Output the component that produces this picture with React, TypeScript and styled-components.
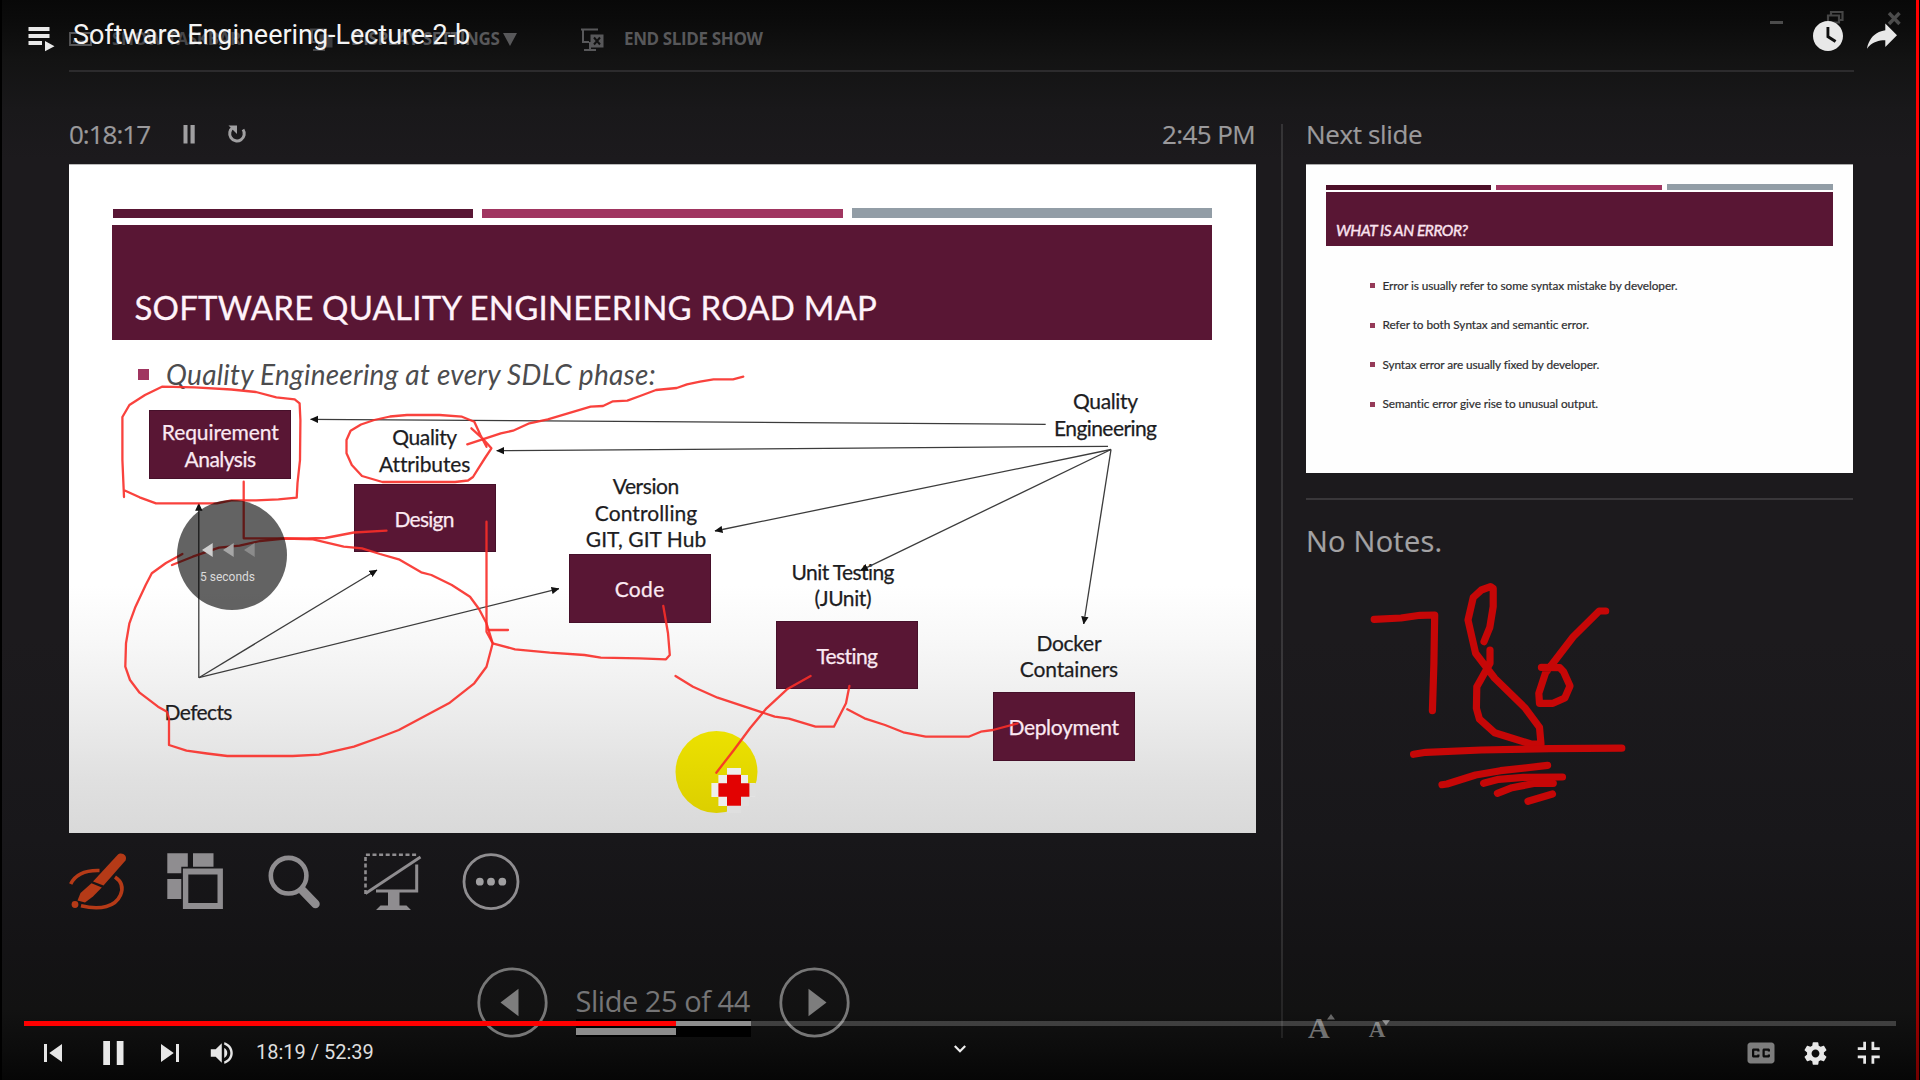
import React from "react";
import styled, { createGlobalStyle } from "styled-components";

const PLUM = "#591634";
const PINK = "#a03560";
const STEEL = "#929da6";
const ui = `"Open Sans", "Noto Sans", sans-serif`;
const slideFont = `Lato, "Open Sans", sans-serif`;

const SLIDE_X = 69;
const SLIDE_Y = 164;

const GlobalStyle = createGlobalStyle`
  body { margin: 0; background: #000; overflow: hidden; }
  * { box-sizing: border-box; }
  svg { display: block; flex: none; }
`;

const Player = styled.main`
  position: relative;
  width: 1920px;
  height: 1080px;
  overflow: hidden;
  background: #000;
  padding: 0 1px 0 2px;
  display: flex;
`;

const RecordingEdge = styled.div`
  width: 3px;
  background: linear-gradient(#f00 0, #f00 55%, #c00000 88%, #700000 100%);
`;

/* ---------- presenter view ---------- */

const Presenter = styled.section`
  flex: 1;
  height: 1080px;
  padding: 0 60px 0 67px;
  display: flex;
  flex-direction: column;
  background: linear-gradient(
    #080808 0, #0b0b0b 20px, #131313 60px, #19181a 110px, #1c1a1d 160px,
    #1c1a1d 640px, #18171a 840px, #141315 950px, #121212 1010px, #0c0c0c 1050px, #060606 1080px
  );
`;

const PresenterBar = styled.header`
  height: 72px;
  border-bottom: 2px solid #2c2b2d;
  display: flex;
  align-items: flex-start;
  padding-top: 26px;
  margin-right: 2px;
  position: relative;
`;

const BarItem = styled.div<{ $w: number; $dim?: boolean }>`
  display: flex;
  align-items: center;
  width: ${(p) => p.$w}px;
  height: 26px;
  color: ${(p) => (p.$dim ? "#454547" : "#58585a")};
  font: 700 17px/26px ${ui};
  letter-spacing: -0.37px;
  white-space: nowrap;
`;

const BarIcon = styled.span<{ $gap: number }>`
  display: flex;
  margin-right: ${(p) => p.$gap}px;
`;

const WindowButtons = styled.div`
  position: absolute;
  left: 1699px;
  top: 9px;
`;

const Columns = styled.div`
  display: grid;
  grid-template-columns: 1186px 51px 547px;
  height: 1008px;
`;

const SlideColumn = styled.div`
  padding-top: 44px;
`;

const SideColumn = styled.div`
  padding-top: 44px;
`;

const Divider = styled.div`
  width: 2px;
  height: 914px;
  margin: 52px 0 0 25.5px;
  background: linear-gradient(#353436 0, #3a383b 80%, #222 100%);
`;

const Label = styled.span<{ $ls: number }>`
  font: 400 26px/36px ${ui};
  letter-spacing: ${(p) => p.$ls}px;
  color: #9b9a9c;
  -webkit-text-stroke: 0.2px #9b9a9c;
  white-space: nowrap;
`;

const StatusRow = styled.div`
  display: flex;
  align-items: center;
  height: 48px;
  padding-bottom: 12px;
`;

const TimerButtons = styled.div`
  margin-left: 33px;
  flex: 1;
`;

/* ---------- slides ---------- */

const Slide = styled.article`
  position: relative;
  width: 1186.5px;
  height: 668.5px;
  padding: 44px 43.5px 0 43px;
  background: linear-gradient(#fff 0, #fff 63%, #f7f7f7 72%, #ececec 82%, #e0e0e0 92%, #d9d9d9 100%);
  box-shadow: inset 0 1px 0 #bbb;
`;

const Stripes = styled.div<{ $gap: number; $inset: number }>`
  display: grid;
  grid-template-columns: repeat(3, 1fr);
  column-gap: ${(p) => p.$gap}px;
  align-items: end;
  padding-left: ${(p) => p.$inset}px;
`;

const Stripe = styled.div<{ $c: string; $h: number }>`
  height: ${(p) => p.$h}px;
  background: ${(p) => p.$c};
`;

const SlideTitle = styled.h1`
  margin: 7px 0 0;
  height: 115.5px;
  padding: 62.5px 0 0 22.5px;
  background: ${PLUM};
  color: #fff3fa;
  font: 400 33px/40px ${slideFont};
  -webkit-text-stroke: 0.3px #fff3fa;
  letter-spacing: 0.2px;
  white-space: nowrap;
`;

const SlideLead = styled.p`
  margin: 0;
  padding: 16px 0 0 26px;
  display: flex;
  align-items: center;
  color: #4c4c4e;
  font: italic 400 28px/36px ${slideFont};
  letter-spacing: 0.27px;
  white-space: nowrap;
  &::before {
    content: "";
    width: 11px;
    height: 11px;
    margin-right: 17px;
    background: ${PINK};
  }
`;

const Diagram = styled.div`
  position: absolute;
  inset: 0;
`;

const lines = `
  display: flex;
  flex-direction: column;
  align-items: center;
  font: 400 21px/26.8px ${slideFont};
  -webkit-text-stroke: 0.25px currentColor;
  white-space: nowrap;
`;

const Phase = styled.div<{ $x: number; $y: number }>`
  ${lines}
  position: absolute;
  left: ${(p) => p.$x - SLIDE_X}px;
  top: ${(p) => p.$y - SLIDE_Y}px;
  width: 142px;
  height: 68.5px;
  padding-top: 2.4px;
  justify-content: center;
  background: ${PLUM};
  border: 1px solid #46102a;
  color: #fbe9f2;
`;

const Note = styled.div<{ $cx: number; $y: number }>`
  ${lines}
  position: absolute;
  left: ${(p) => p.$cx - SLIDE_X - 80}px;
  top: ${(p) => p.$y - SLIDE_Y + 1}px;
  width: 160px;
  color: #1d1d1f;
`;

const Line = styled.span<{ $ls: number }>`
  letter-spacing: ${(p) => p.$ls}px;
  margin-right: ${(p) => -p.$ls}px;
`;

const Ink = styled.svg`
  position: absolute;
  left: 0;
  top: 0;
  overflow: visible;
`;

const NextSlide = styled.article`
  width: 547px;
  height: 308.5px;
  padding: 20px 20px 0 19.5px;
  background: #fefefe;
  box-shadow: inset 0 1px 0 #aaa;
`;

const NextTitle = styled.h2`
  margin: 2.5px 0 0;
  height: 53.5px;
  padding: 27.5px 0 0 10.5px;
  background: ${PLUM};
  color: #fbe3ef;
  font: italic 400 15.5px/20px ${slideFont};
  -webkit-text-stroke: 0.4px #fbe3ef;
  letter-spacing: -0.45px;
  white-space: nowrap;
`;

const Points = styled.ul`
  list-style: none;
  margin: 20.5px 0 0;
  padding: 0 0 0 44.5px;
`;

const Point = styled.li<{ $ls: number }>`
  display: flex;
  align-items: center;
  height: 39.35px;
  color: #2e2e30;
  font: 400 11.8px/20px ${slideFont};
  -webkit-text-stroke: 0.2px #2e2e30;
  letter-spacing: ${(p) => p.$ls}px;
  white-space: nowrap;
  &::before {
    content: "";
    width: 5px;
    height: 5px;
    margin-right: 7.5px;
    background: #953a58;
  }
`;

const Notes = styled.div`
  margin-top: 25px;
  border-top: 2px solid #39373a;
  padding: 21.5px 0 0 0;
  color: #a3a2a4;
  font: 400 29px/40px ${ui};
  -webkit-text-stroke: 0.2px #a3a2a4;
  letter-spacing: 0.25px;
`;

const Tools = styled.div`
  margin-top: 17.5px;
  height: 66px;
`;

const SlideNav = styled.nav`
  display: flex;
  align-items: flex-start;
  margin: 51px 0 0 408px;
`;

const SlideCount = styled.div`
  width: 175.5px;
  margin: 13.5px 27.5px 0;
  color: #757576;
  font: 400 29px/40px ${ui};
  letter-spacing: -0.46px;
  white-space: nowrap;
`;

const CountTrack = styled.div`
  height: 18px;
  background: #000;
  margin-top: -1.5px;
  padding-top: 8.5px;
`;

const CountFill = styled.div`
  width: 100px;
  height: 7.5px;
  background: #8c8c8c;
`;

const FontSizes = styled.div`
  display: flex;
  align-items: flex-end;
  height: 30px;
  margin-top: 450px;
  padding-left: 2px;
  gap: 34px;
`;

const FontSize = styled.span<{ $s: number }>`
  display: flex;
  align-items: flex-start;
  color: #717171;
  font: 700 ${(p) => p.$s}px/${(p) => p.$s * 0.9}px "Liberation Serif", serif;
`;

const SizeCaret = styled.svg`
  margin-left: -3px;
`;

/* ---------- player chrome ---------- */

const TopChrome = styled.div`
  position: absolute;
  inset: 0 0 auto 0;
  height: 72px;
  display: flex;
  align-items: center;
  padding: 0 11px 0 28px;
`;

const TitleIcon = styled.span`
  padding-top: 6px;
`;

const VideoTitle = styled.div`
  flex: 1;
  padding: 0 0 2px 18px;
  color: #f4f4f4;
  font: 400 27px/34px Roboto, sans-serif;
  letter-spacing: -0.04px;
  white-space: nowrap;
`;

const TopButton = styled.span`
  width: 54px;
  display: flex;
`;

const Rewind = styled.div`
  position: absolute;
  left: 177px;
  top: 500px;
  width: 110px;
  height: 110px;
  border-radius: 50%;
  background: rgba(0, 0, 0, 0.61);
  padding: 43px 0 0 25px;
  color: #dcdcdc;
  font: 400 12px/18px Roboto, sans-serif;
`;

const RewindText = styled.div`
  margin: 11px 0 0 -2px;
`;

const BottomChrome = styled.div`
  position: absolute;
  left: 24px;
  right: 24px;
  bottom: 0;
  height: 59px;
`;

const Progress = styled.div`
  height: 5px;
  display: flex;
  background: rgba(255, 255, 255, 0.2);
`;

const Played = styled.div`
  width: 651.5px;
  background: #f00;
`;

const Loaded = styled.div`
  width: 75.5px;
  background: #8e8e8e;
`;

const Controls = styled.div`
  display: flex;
  align-items: center;
  height: 54px;
  position: relative;
`;

const Control = styled.span<{ $w?: number }>`
  width: ${(p) => p.$w ?? 54}px;
  height: 54px;
  display: flex;
  align-items: center;
  justify-content: center;
`;

const Time = styled.span`
  flex: 1;
  padding: 0 0 3px 7px;
  color: #dedede;
  font: 400 20px/28px Roboto, sans-serif;
`;

const MoreChevron = styled.span`
  position: absolute;
  left: 929px;
  top: 17px;
`;

/* ---------- drawings ---------- */

const arrows: [number, number, number, number][] = [
  [1045.7, 424.3, 310.6, 419.3],
  [1108, 446.3, 496.7, 450.7],
  [1111, 449.5, 715, 531],
  [1111, 449.5, 860.4, 570.6],
  [1111, 449.5, 1083.7, 624],
  [198.8, 677.7, 198.8, 503.3],
  [198.8, 677.7, 377, 570],
  [198.8, 677.7, 559, 588.7],
];

const strokes = [
  "124,497 122.4,460 122.4,417 129.4,405 145,395 162,386.7 194.7,387.3 231.4,389.5 256,392 276.3,397.3 294.7,399.3 299.6,403.3 300.4,420 300,460 297.5,483 296.7,497.7 278.4,499.3 256,500.3 231.4,500.3 217,503.3 156,503.3 139.6,497.3 125.3,490.7",
  "471.4,428.3 482.4,438.3 491.4,448.3 485,458 478.4,468.3 473,477 468,480.5 455,482 382.4,482 362,476 351.8,465 346.5,453.3 346.5,440 350.6,430.7 361,424.5 374.3,420 390,416.5 407,415 439.6,415 462,416.7 474.3,421.7 480.4,435 486.5,446.7",
  "467.3,444.3 500.8,433.3 513,430.7 529.4,423.3 547.8,419.3 590.6,406.7 603,406 613,401.3 627.3,400.7 640,396 656,390 676.7,388 687,384.3 700,381.7 713.5,379.3 733,379.3 743.3,376.7",
  "243.7,481.7 243.7,538.3 307,538.3 325.3,538 353.9,532.5 386.5,530.7",
  "182.4,554 166,563 151.8,573.3 145.7,585 135.5,606.7 129.4,623.3 126,643.3 125.3,666.7 130,680 139.6,692.7 158,706.7 167,711.7 169,718.3 169,745 186.5,750.7 207,753.5 227.3,756 292.7,756 319,754.7 353.9,746.7 378,738 398.8,730 425,716 449.8,702.7 474.3,683.3 486.5,666.7 492.7,643.3 486.5,623.3 479,609 470,596.7 451.8,585 431.4,575 421.2,572.3 398.8,559.3 380,554 362,548.3 343.7,546.7 313,539.3 284.5,538.5 260,541 239.6,545.7 219,547.7 192.7,556.7 172,565",
  "486.5,521.7 486.5,631.7 492.7,643.3 515,649.3 549.8,652.7 584.5,655 600.8,657.7 639.6,658.3 666,659.3 669.8,655 668,633.3 663.3,606",
  "488.6,630 508,630",
  "675.5,676 693,686.7 717.6,697.7 750,708.3 774.7,716.7 789,718.7 815.5,726.7 833.9,726.7 846,703.3 849.4,686",
  "847.3,709.3 864.5,718.3 885,725 903.3,732.3 925.7,736.7 968.6,736.7 980.8,731.7 993,730 1017.6,723.3",
  "810.6,676 787,689.3 766.5,708.3 750,728.3 733.9,750 716.3,772.7",
];

const scribbles = [
  "1374.2,619.3 1401,618 1420,615.3 1434.7,615 1433.9,663.3 1432.4,710.7",
  "1484,641.7 1489.8,627.3 1493.2,606.7 1493.2,588.3 1490.5,586.7 1481.4,590 1473.3,597.3 1468,620 1475.6,653.3 1494.7,678.3 1525.4,708.3 1539.5,727.3 1541,744 1531,744 1494.7,732.7 1479.4,719 1476.4,708.3 1476.8,686.7 1490,663.3 1490,650",
  "1605.7,611 1599.2,611 1573.2,636.7 1545.6,672.7 1538.8,693.3 1539.5,703.3 1553,703.3 1564.8,698 1570,686 1563.6,671.7 1559.8,667.7 1541.4,667.3",
  "1413.6,754.3 1425.9,752.3 1481.4,750 1550,748.6 1621.8,748.2",
  "1442,784.7 1447,784 1475.6,775 1500.5,770.7 1547.6,765.3",
  "1483.6,783.3 1498.6,779.3 1523.5,777.3 1562.5,777",
  "1497.4,793.3 1512,787.7 1535,783.3 1553.3,783.3",
  "1528,801.3 1552.5,794",
];

const CursorMark = () => (
  <g>
    <circle cx="716.5" cy="772" r="41" fill="url(#spot)" />
    <path d="M727 768h14v7h7v8h7v14h-7v9h-7v7h-14v-7h-8.600v-9h-7v-14h7v-8h8.600z" fill="#eeeeec" />
    <path d="M741 806v7h-14v-7zM749 783.300h7v13.400h-7zM741 797h8v9h-8z" fill="#dfdfdf" />
    <path d="M727 774.700h14v8.600h8.400v13.400h-8.400v9h-14v-9h-8.600v-13.400h8.600z" fill="#e20202" />
  </g>
);

const SlideInk = () => (
  <Ink width="1186" height="668" viewBox="69 164 1186 668">
    <defs>
      <marker id="tip" viewBox="0 0 8 8" refX="7.500" refY="4" markerWidth="8" markerHeight="8" markerUnits="userSpaceOnUse" orient="auto">
        <path d="M0 0.300L8 4L0 7.700z" fill="#111" />
      </marker>
      <linearGradient id="spot" x1="0" y1="0" x2="0" y2="1">
        <stop offset="0" stopColor="#ece100" />
        <stop offset="1" stopColor="#dccf00" />
      </linearGradient>
    </defs>
    {arrows.map(([x1, y1, x2, y2], i) => (
      <line key={i} x1={x1} y1={y1} x2={x2} y2={y2} stroke="#3c3c3c" strokeWidth="1.300" markerEnd="url(#tip)" />
    ))}
    <CursorMark />
    <g fill="none" stroke="#f82e28" strokeOpacity="0.9" strokeWidth="2.300" strokeLinejoin="round" strokeLinecap="round">
      {strokes.map((points, i) => (
        <polyline key={i} points={points} />
      ))}
    </g>
  </Ink>
);

const ScreenInk = () => (
  <Ink width="1920" height="1080" viewBox="0 0 1920 1080">
    <g fill="none" stroke="#c60707" strokeWidth="7.200" strokeLinejoin="round" strokeLinecap="round">
      {scribbles.map((points, i) => (
        <polyline key={i} points={points} />
      ))}
    </g>
  </Ink>
);

const ToolIcons = () => (
  <svg width="470" height="66" viewBox="69 850 470 66">
    <g fill="none" stroke="#b53a17" strokeWidth="3.600">
      <path d="M70.700 884C75 875 84 870 99.500 870.500" />
      <path d="M115 877C122.500 882 123 889 120.500 895C115.500 906.500 101 910.500 81 905.800" />
    </g>
    <path d="M117.500 855C121 851.500 128 855 125.500 860.500L103.500 885.500L93 881.500z" fill="#b53a17" />
    <path d="M91.500 883.200L101.800 887.500L93 896.500L85 902.500L77.500 900.500L80.500 893z" fill="#b53a17" />
    <circle cx="75" cy="904.500" r="3.400" fill="#b53a17" />
    <g fill="#8f8d90">
      <path d="M167.300 853.300h20.500v13.500h-6.500v6.500h-14zM193 853.300h20.500v13.500h-20.500zM167.300 879h14v20h-14z" />
      <path d="M182.900 868.500h40v40.500h-40zM188.300 874.500v28.500h29.200v-28.500z" fillRule="evenodd" />
    </g>
    <g fill="none" stroke="#8f8d90">
      <circle cx="288.600" cy="875.700" r="17.800" strokeWidth="4.600" />
      <path d="M302.500 890.500L315.500 904" strokeWidth="8.500" strokeLinecap="round" />
      <path d="M365.500 894V854.800H418" strokeWidth="2.600" strokeDasharray="4 2.600" />
      <path d="M365.500 893.500L420.500 857" strokeWidth="2.800" />
      <path d="M416.700 864.500V891H376" strokeWidth="3" />
      <circle cx="491" cy="881.700" r="27" strokeWidth="2.800" />
    </g>
    <path d="M388 892h11.500v13.500h7l4.500 4.500h-35l4.500-4.500h7.500z" fill="#8f8d90" />
    <g fill="#a09fa1">
      <circle cx="479.800" cy="881.700" r="3.900" />
      <circle cx="491" cy="881.700" r="3.900" />
      <circle cx="502.300" cy="881.700" r="3.900" />
    </g>
  </svg>
);

const NavButton = ({ next }: { next?: boolean }) => (
  <svg width="71" height="71" viewBox="-35.500 -35.500 71 71">
    <circle r="33.700" fill="none" stroke="#777" strokeWidth="2.800" />
    <path d={next ? "M-6-13.700L12 0L-6 13.700z" : "M6-13.700L-12 0L6 13.700z"} fill="#7d7d7d" />
  </svg>
);

const ScreenIcon = ({ dim }: { dim?: boolean }) => (
  <svg width="23" height="23" viewBox="0 0 23 23">
    <g fill="none" stroke={dim ? "#454547" : "#58585a"} strokeWidth="2">
      <path d="M0 1.500h17M2 1.500V14h6M9 14v7M3 22h12" />
    </g>
    <rect x="9.500" y="6.500" width="13" height="13" fill={dim ? "#3c3c3e" : "#58585a"} />
    {!dim && <path d="M13 9.500l6 7M19 9.500l-6 7" stroke="#111" strokeWidth="2" />}
  </svg>
);

const phases: [number, number, [string, number][]][] = [
  [149.3, 410.3, [["Requirement", -0.08], ["Analysis", -0.52]]],
  [353.5, 483.5, [["Design", -0.74]]],
  [568.5, 554.3, [["Code", 0.3]]],
  [776.2, 620.8, [["Testing", -0.6]]],
  [992.7, 692.3, [["Deployment", -0.32]]],
];

const notes: [number, number, [string, number][]][] = [
  [424.7, 423.2, [["Quality", -0.36], ["Attributes", -0.13]]],
  [646, 471.8, [["Version", -0.43], ["Controlling", 0.1], ["GIT, GIT Hub", 0.04]]],
  [1105.5, 386.8, [["Quality", -0.36], ["Engineering", -0.57]]],
  [843, 557.5, [["Unit Testing", -0.58], ["(JUnit)", -0.42]]],
  [1069, 628.5, [["Docker", -0.3], ["Containers", -0.15]]],
  [198.5, 697.8, [["Defects", -0.63]]],
];

const points: [string, number][] = [
  ["Error is usually refer to some syntax mistake by developer.", -0.06],
  ["Refer to both Syntax and semantic error.", -0.04],
  ["Syntax error are usually fixed by developer.", -0.1],
  ["Semantic error give rise to unusual output.", -0.08],
];

const Lines = ({ text }: { text: [string, number][] }) => (
  <>
    {text.map(([t, ls]) => (
      <Line key={t} $ls={ls}>{t}</Line>
    ))}
  </>
);

const PresenterHeader = () => (
  <PresenterBar>
    <BarItem $w={241} $dim>
      <BarIcon $gap={20}>
        <svg width="23" height="14" viewBox="0 0 23 14">
          <path d="M1 1h21v12H1z" fill="none" stroke="#58585a" strokeWidth="1.800" />
          <path d="M4 9.500h4M10 9.500h9" stroke="#58585a" strokeWidth="2" />
        </svg>
      </BarIcon>
      SHOW TASKBAR
    </BarItem>
    <BarItem $w={271}>
      <BarIcon $gap={18}><ScreenIcon dim /></BarIcon>
      DISPLAY SETTINGS&nbsp;
      <svg width="14" height="13" viewBox="0 0 14 13"><path d="M0 0h14L7 13z" fill="#58585a" /></svg>
    </BarItem>
    <BarItem $w={200}>
      <BarIcon $gap={20}><ScreenIcon /></BarIcon>
      END SLIDE SHOW
    </BarItem>
    <WindowButtons>
      <svg width="136" height="18" viewBox="1768 9 136 18">
        <path d="M1770 22.500h13" stroke="#4c4c4c" strokeWidth="3" />
        <path d="M1831 15V12h11.500v8H1839M1828 15.500h11v7h-11z" fill="none" stroke="#454545" strokeWidth="2.200" />
        <path d="M1889 13l10.500 11M1899.500 13L1889 24" stroke="#4c4c4c" strokeWidth="3.400" />
      </svg>
    </WindowButtons>
  </PresenterBar>
);

const CurrentSlide = () => (
  <Slide>
    <Stripes $gap={9} $inset={1}>
      <Stripe $c={PLUM} $h={8.7} />
      <Stripe $c={PINK} $h={8.7} />
      <Stripe $c={STEEL} $h={9.7} />
    </Stripes>
    <SlideTitle>SOFTWARE QUALITY ENGINEERING ROAD MAP</SlideTitle>
    <SlideLead>Quality Engineering at every SDLC phase:</SlideLead>
    <Diagram>
      {phases.map(([x, y, text]) => (
        <Phase key={x} $x={x} $y={y}><Lines text={text} /></Phase>
      ))}
      {notes.map(([cx, y, text]) => (
        <Note key={cx} $cx={cx} $y={y}><Lines text={text} /></Note>
      ))}
      <SlideInk />
    </Diagram>
  </Slide>
);

const UpcomingSlide = () => (
  <NextSlide>
    <Stripes $gap={5} $inset={0}>
      <Stripe $c="#4d1029" $h={4.6} />
      <Stripe $c={PINK} $h={4.6} />
      <Stripe $c={STEEL} $h={5.8} />
    </Stripes>
    <NextTitle>WHAT IS AN ERROR?</NextTitle>
    <Points>
      {points.map(([t, ls]) => (
        <Point key={t} $ls={ls}>{t}</Point>
      ))}
    </Points>
  </NextSlide>
);

const PlayerTop = () => (
  <TopChrome>
    <TitleIcon>
      <svg width="27" height="26" viewBox="28 26 27 26" fill="#e9e9e9">
        <path d="M28.500 27h21v4h-21zM28.500 34h21v4h-21zM28.500 41h13.500v4H28.500zM45 41l9.500 5.200L45 51.300z" />
      </svg>
    </TitleIcon>
    <VideoTitle>Software Engineering-Lecture-2-b</VideoTitle>
    <TopButton>
      <svg width="54" height="54" viewBox="0 0 36 36">
        <path fill="#e8e8e8" d="M18,8 C12.47,8 8,12.47 8,18 C8,23.52 12.47,28 18,28 C23.52,28 28,23.52 28,18 C28,12.47 23.52,8 18,8 Z M17,12 L18.900,12 L18.900,17.860 L23.600,20.810 L22.500,22.540 L17,19.020 Z" fillRule="evenodd" />
      </svg>
    </TopButton>
    <TopButton>
      <svg width="54" height="54" viewBox="0 0 36 36">
        <path fill="#e8e8e8" d="m 20.20,14.19 0,-4.45 7.79,7.79 -7.79,7.79 0,-4.56 C 16.27,20.69 12.10,21.81 9.34,24.76 8.80,25.13 7.60,27.29 8.12,25.65 9.08,21.32 11.80,17.18 15.98,15.38 c 1.33,-0.60 2.76,-0.98 4.21,-1.19 z" />
      </svg>
    </TopButton>
  </TopChrome>
);

const PlayerBottom = () => (
  <BottomChrome>
    <Progress>
      <Played />
      <Loaded />
    </Progress>
    <Controls>
      <Control $w={58}>
        <svg width="54" height="54" viewBox="0 0 36 36"><path fill="#e6e6e6" d="m 12,12 h 2 v 12 h -2 z m 3.500,6 8.500,6 V 12 z" /></svg>
      </Control>
      <Control $w={61}>
        <svg width="54" height="54" viewBox="0 0 36 36"><path fill="#e9e9e9" d="M11.500 10h4.500v16h-4.500zM20.500 10h4.500v16h-4.500z" /></svg>
      </Control>
      <Control $w={53}>
        <svg width="54" height="54" viewBox="0 0 36 36"><path fill="#e6e6e6" d="M12,24 L20.500,18 L12,12 V24 Z M22,12 V24 H24 V12 H22 Z" /></svg>
      </Control>
      <Control $w={53}>
        <svg width="44" height="44" viewBox="0 0 36 36">
          <path fill="#e6e6e6" d="M8,21 L12,21 L17,26 L17,10 L12,15 L8,15 L8,21 Z M19,14 L19,22 C20.480,21.320 21.500,19.770 21.500,18 C21.500,16.260 20.480,14.740 19,14 Z M19,11.290 C21.890,12.150 24,14.830 24,18 C24,21.170 21.890,23.850 19,24.710 L19,26.770 C23.010,25.860 26,22.280 26,18 C26,13.720 23.010,10.140 19,9.230 Z" />
        </svg>
      </Control>
      <Time>18:19 / 52:39</Time>
      <Control>
        <svg width="54" height="54" viewBox="0 0 36 36">
          <path fill="#7d7d7d" fillRule="evenodd" d="M11,11 C9.890,11 9,11.900 9,13 L9,23 C9,24.100 9.890,25 11,25 L25,25 C26.100,25 27,24.100 27,23 L27,13 C27,11.900 26.100,11 25,11 L11,11 Z M17,17 L15.500,17 L15.500,16.500 L13.500,16.500 L13.500,19.500 L15.500,19.500 L15.500,19 L17,19 L17,20 C17,20.550 16.550,21 16,21 L13,21 C12.450,21 12,20.550 12,20 L12,16 C12,15.450 12.450,15 13,15 L16,15 C16.550,15 17,15.450 17,16 L17,17 Z M24,17 L22.500,17 L22.500,16.500 L20.500,16.500 L20.500,19.500 L22.500,19.500 L22.500,19 L24,19 L24,20 C24,20.550 23.550,21 23,21 L20,21 C19.450,21 19,20.550 19,20 L19,16 C19,15.450 19.450,15 20,15 L23,15 C23.550,15 24,15.450 24,16 L24,17 Z" />
        </svg>
      </Control>
      <Control>
        <svg width="27" height="27" viewBox="0 0 24 24">
          <path fill="#e8e8e8" d="M19.430 12.980c.04-.32.07-.64.07-.98s-.03-.66-.07-.98l2.110-1.650c.19-.15.24-.42.12-.64l-2-3.460c-.12-.22-.39-.3-.61-.22l-2.490 1c-.52-.4-1.080-.73-1.690-.98l-.38-2.650C14.460 2.180 14.250 2 14 2h-4c-.25 0-.46.18-.49.42l-.38 2.650c-.61.25-1.170.59-1.690.98l-2.490-1c-.23-.09-.49 0-.61.22l-2 3.460c-.13.22-.07.49.12.64l2.110 1.650c-.04.32-.07.65-.07.98s.03.66.07.98l-2.110 1.650c-.19.15-.24.42-.12.64l2 3.460c.12.22.39.3.61.22l2.490-1c.52.4 1.080.73 1.690.98l.38 2.650c.03.24.24.42.49.42h4c.25 0 .46-.18.49-.42l.38-2.650c.61-.25 1.170-.59 1.690-.98l2.490 1c.23.09.49 0 .61-.22l2-3.460c.12-.22.07-.49-.12-.64l-2.110-1.650zM12 15.500c-1.930 0-3.500-1.570-3.500-3.500s1.570-3.500 3.500-3.500 3.500 1.570 3.500 3.500-1.570 3.500-3.500 3.500z" />
        </svg>
      </Control>
      <Control>
        <svg width="49.500" height="49.500" viewBox="0 0 36 36">
          <path fill="#e8e8e8" d="m 14,14 -4,0 0,2 6,0 0,-6 -2,0 0,4z M 22,14 l 0,-4 -2,0 0,6 6,0 0,-2 -4,0z M 20,26 l 2,0 0,-4 4,0 0,-2 -6,0 0,6z M 10,22 l 4,0 0,4 2,0 0,-6 -6,0 0,2z" />
        </svg>
      </Control>
      <MoreChevron>
        <svg width="14" height="12" viewBox="0 0 14 12"><path d="M1.800 3L7 8.200L12.200 3" fill="none" stroke="#eee" strokeWidth="2.200" /></svg>
      </MoreChevron>
    </Controls>
  </BottomChrome>
);

export default function App() {
  return (
    <Player>
      <GlobalStyle />
      <Presenter>
        <PresenterHeader />
        <Columns>
          <SlideColumn>
            <StatusRow>
              <Label $ls={-1}>0:18:17</Label>
              <TimerButtons>
                <svg width="66" height="22" viewBox="183 123 66 22">
                  <path d="M183.500 125h4v18.500h-4zM190.500 125h4.200v18.500h-4.200z" fill="#a09fa1" />
                  <path d="M233 127.500A7.300 7.300 0 1 0 243 129.500" fill="none" stroke="#a09fa1" strokeWidth="3" />
                  <path d="M228.500 125.500h8.500v8.500z" fill="#a09fa1" />
                </svg>
              </TimerButtons>
              <Label $ls={-0.6}>2:45 PM</Label>
            </StatusRow>
            <CurrentSlide />
            <Tools><ToolIcons /></Tools>
            <SlideNav>
              <NavButton />
              <SlideCount>
                Slide 25 of 44
                <CountTrack><CountFill /></CountTrack>
              </SlideCount>
              <NavButton next />
            </SlideNav>
          </SlideColumn>
          <Divider />
          <SideColumn>
            <StatusRow><Label $ls={-0.35}>Next slide</Label></StatusRow>
            <UpcomingSlide />
            <Notes>No Notes.</Notes>
            <FontSizes>
              <FontSize $s={30}>
                A<SizeCaret width="8" height="6" viewBox="0 0 8 6"><path d="M0 5.500h8L4 0z" fill="#666" /></SizeCaret>
              </FontSize>
              <FontSize $s={23}>
                A<SizeCaret width="8" height="6" viewBox="0 0 8 6"><path d="M0 0h8L4 5.500z" fill="#777" /></SizeCaret>
              </FontSize>
            </FontSizes>
          </SideColumn>
        </Columns>
      </Presenter>
      <RecordingEdge />
      <ScreenInk />
      <Rewind>
        <svg width="53" height="14" viewBox="0 0 53 14">
          <path d="M10.700 0v14L0 7z" fill="#cfcfcf" />
          <path d="M31.700 0v14L21 7z" fill="#a6a6a6" />
          <path d="M52.700 0v14L42 7z" fill="#8b8b8b" />
        </svg>
        <RewindText>5 seconds</RewindText>
      </Rewind>
      <PlayerTop />
      <PlayerBottom />
    </Player>
  );
}
